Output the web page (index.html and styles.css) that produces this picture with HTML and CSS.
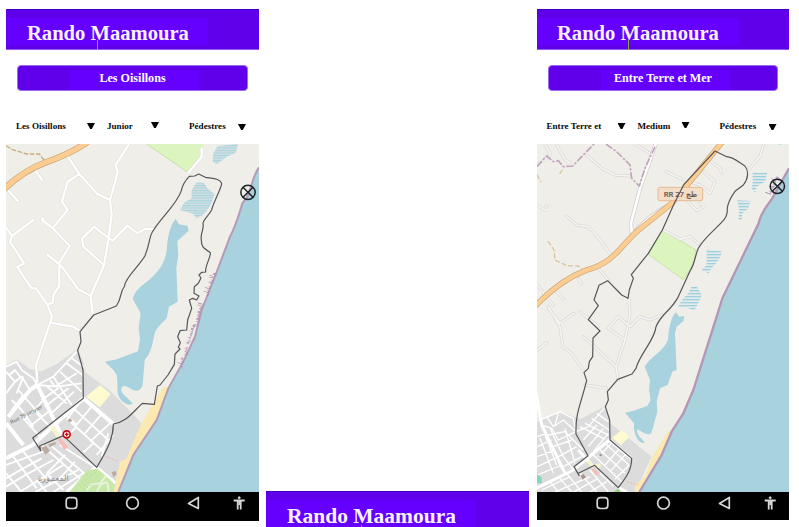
FILE: index.html
```html
<!DOCTYPE html>
<html lang="fr">
<head>
<meta charset="utf-8">
<title>Rando Maamoura</title>
<link rel="stylesheet" href="styles.css">
</head>
<body>
<svg class="defs" width="0" height="0" aria-hidden="true">
  <defs>
    <pattern id="wet" width="12" height="7.5" patternUnits="userSpaceOnUse"><rect width="12" height="7.5" fill="#cfdfe1"/><rect width="12" height="3" fill="#a9d3df"/></pattern>
    <pattern id="wet2" width="12" height="9" patternUnits="userSpaceOnUse"><rect width="12" height="9" fill="#e3ecea"/><rect width="12" height="4" fill="#9dcfdf"/></pattern>
    <g id="nav" fill="none" stroke="#d6d6d6" stroke-width="1.7">
      <rect x="60.2" y="5.7" width="10.6" height="10.8" rx="3"/>
      <circle cx="126.500" cy="11.100" r="5.900"/>
      <path d="M192.300 5.500V16.500L182.500 11.500Z" stroke-linejoin="round"/>
      <g stroke-width="1.800"><circle cx="233.200" cy="5.800" r="1" fill="#d6d6d6" stroke-width="1"/><path d="M227.700 8.500H238.700M233.200 8V13" /><path d="M231.700 9V17.500M234.700 9V17.500"/></g>
    </g>
    <g id="locate" fill="none" stroke="#1c2428" stroke-width="4.500"><circle r="21.500"/><path d="M-15-15 15 15M15-15-15 15"/></g>
  </defs>
</svg>
<main class="board">
  <section class="phone">
    <header class="bar"><h1>Rando Maamoura</h1><i class="caret"></i></header>
    <button class="trail">Les Oisillons</button>
    <div class="filters">
      <span class="filter one">Les Oisillons<b></b></span>
      <span class="filter two">Junior<b></b></span>
      <span class="filter three">Pédestres<b></b></span>
    </div>
    <svg class="map" viewBox="18 12 759 1044" preserveAspectRatio="none">
      <rect x="18" y="12" width="759" height="1044" fill="#f0eee8"/>
      <path d="M18 675 50 658 90 688 125 694 170 672 232 628 250 665 254 695 330 752 425 850 425 900 345 1056H18Z" fill="#dcdcdc"/>
      <path d="M440 12H610L605 50 565 98Z" fill="#dcf4bd"/>
      <path d="M440 12 565 98" stroke="#c7dfb0" stroke-width="3"/>
      <path d="M653 18 714 12 707 38 680 50 652 72 638 66 640 40Z" fill="url(#wet)"/>
      <path d="M590 127 612 128 622 145 644 163 630 198 610 225 590 235 580 222 540 210 552 188 575 175 575 150Z" fill="url(#wet)"/>
      <path d="M777 80C750 120 756 165 728 188C717 220 711 250 690 290L650 396 605 510 585 590 550 665 505 745 470 840 400 945 355 1056H777Z" fill="#a9d2df"/>
      <path d="M490 740 425 850 400 905 380 955 360 965 340 1056H356L370 1012 400 945 470 840 508 742Z" fill="#fbe9b1"/>
      <path d="M777 82C750 120 756 165 728 188C717 220 711 250 690 290L650 396 605 510 585 590 550 665 505 745 470 840 400 945 355 1056" fill="none" stroke="#b79ab7" stroke-width="6"/>
      <path d="M527 237 537 253 562 257 566 272 551 286 532 303 535 345 529 385 533 485 507 500 500 535C480 555 464 570 462 590C455 620 452 640 434 660L428 735C419 760 402 752 392 746C372 730 358 740 366 758L398 790C390 800 365 790 356 768C350 755 354 730 350 705L340 690 315 665 350 658 414 634 420 596 416 565 422 520 400 480C396 470 410 450 425 437C460 412 495 380 500 330C503 290 510 255 527 237Z" fill="#a9d2df"/>
      <g fill="none" stroke-linejoin="round" stroke-linecap="round">
        <path class="road-edge" d="M386 14 347 75 353 98 330 180 335 225 325 300 312 375 272 468 278 520M205 52 238 102 290 160 330 180M107 93 126 120M22 148 54 184M238 102 203 125 186 185 203 210 158 264 209 318 178 368 178 438 160 465 158 488 142 494 156 530 150 550 108 675 112 725M142 344 186 380 235 448 272 468M158 264 126 240 130 234M18 262 36 288 100 240M36 288 30 305 72 370 52 382 95 445 108 445 142 494M312 375 250 320 246 295 283 260 300 275 338 302 382 257 412 280 435 267 462 267M150 548 220 560 240 572M605 25 605 50 565 98"/>
        <path class="road" d="M386 14 347 75 353 98 330 180 335 225 325 300 312 375 272 468 278 520M205 52 238 102 290 160 330 180M107 93 126 120M22 148 54 184M238 102 203 125 186 185 203 210 158 264 209 318 178 368 178 438 160 465 158 488 142 494 156 530 150 550 108 675 112 725M142 344 186 380 235 448 272 468M158 264 126 240 130 234M18 262 36 288 100 240M36 288 30 305 72 370 52 382 95 445 108 445 142 494M312 375 250 320 246 295 283 260 300 275 338 302 382 257 412 280 435 267 462 267M150 548 220 560 240 572M605 25 605 50 565 98"/>
        <path d="M20 18 35 28 80 42 118 42 132 60" stroke="#c9ad78" stroke-width="4" stroke-dasharray="11 8"/>
        <path d="M14 146Q70 92 135 68 210 42 260 8" stroke="#c9a576" stroke-width="19"/>
        <path d="M14 146Q70 92 135 68 210 42 260 8" stroke="#fbcd93" stroke-width="15"/>
      </g>
      <g transform="translate(0 510)" fill="none" stroke="#fff" stroke-width="5.500" stroke-linejoin="round">
        <path stroke-width="12" d="M18 445 98 405 250 265 341 343M112 225 150 305 185 378M18 340 70 405M112 225 90 240 25 320M288 472 345 520M288 472 200 546"/>
        <path d="M18 170 50 155 65 180 100 205 112 225 160 200 230 125M18 185 45 215 65 200 90 240M28 195 45 180 60 200M55 240 125 320M35 270 65 300 100 350M70 255 35 300M112 225 170 230 245 220M140 228 200 280M160 200 215 285M180 185 245 245M200 160 248 195M215 145 250 170M150 210 165 230 230 190M125 270 175 235M135 290 205 235M152 312 222 245M75 330 130 270M88 350 145 305M120 380 70 325M45 215 18 250M70 200 50 250M150 350 110 310"/>
        <path d="M215 290 325 390M205 330 310 425M275 290 225 350M305 312 255 370M330 340 270 395M340 375 290 435M240 275 200 330M230 350 200 380M280 400 250 427M195 310 230 345M325 370 305 440"/>
        <path d="M18 465 130 425M40 440 110 535M70 425 150 520M18 505 70 475 125 445M18 530 85 490 160 450M60 545 190 465M125 405 250 515M150 405 265 500M180 405 290 475M18 490 65 546M105 546 235 480M160 546 250 490M195 435 140 490M225 455 175 510M110 510 140 546M140 490 190 540"/>
      </g>
      <path d="M300 735 332 762 300 802 258 770Z" fill="#fffbd0"/>
      <path d="M150 863 163 857 180 890 170 892ZM195 875 214 880 210 900 192 893Z" fill="#f8f6c9"/>
      <path d="M172 897 182 895 205 920 193 930Z" fill="#f5bcb9"/>
      <path d="M124 923 138 917 150 933 136 944ZM145 913 166 906 168 912 150 922ZM203 840 211 834 217 842 208 848ZM335 997 347 992 350 1003 340 1012Z" fill="#bfaaa1"/>
      <path d="M208 1056 262 990 292 986 325 1014 345 1035 340 1056Z" fill="#c7e8a8"/>
      <g fill="none" stroke="#e7f2df" stroke-width="6"><path d="M260 1050 275 1033 300 1030 318 1008M290 1056Q300 1030 320 1027 328 1040 325 1056"/></g>
      <g fill="none" stroke="#88c272" stroke-width="2" stroke-dasharray="2 11"><path d="M235 1035 280 1005 300 1015M230 1048 275 1020M250 1050 295 1022M260 1005 290 998"/></g>
      <path d="M318 950 355 964" stroke="#edb6b2" stroke-width="3" stroke-dasharray="6 4"/>
      <g class="route"><path d="M290 982 190 887 119 918 122 932 98 894 250 775 249 690 233 631 243 605 240 575 281 525 349 498C368 470 357 460 374 438C370 420 420 375 435 347C452 305 447 290 457 276C480 235 530 195 544 152C548 130 560 117 568 109L584 108 596 102 616 112C640 116 660 116 665 130C665 145 640 185 635 210 623 230 610 240 609 250C613 270 600 280 604 300 604 325 615 326 631 338C632 355 615 375 617 396L605 397 597 405 603 414 595 430 583 440 582 460 597 468 590 480 578 475 568 480 575 505 563 540 560 570 540 572 533 590 541 608 535 622 540 627 525 642 523 673 504 705 480 735 472 738 463 793 427 790C395 820 378 847 340 852 340 888 328 920 290 982Z"/></g>
      <circle cx="200" cy="883" r="10.500" fill="#fff" stroke="#c40912" stroke-width="5"/><path d="M194.500 883H205.500M200 877.500V888.500" stroke="#c40912" stroke-width="4"/>
      <g class="place"><text x="34" y="852" font-size="16" transform="rotate(-27 34 852)" fill="#666">Rue 79 janvier</text><text x="160" y="1022" font-size="25" fill="#8a8a8a" text-anchor="middle">المعمورة</text></g>
      <g class="place" fill="#a98bae" font-size="20" text-anchor="middle"><text transform="translate(634 434) rotate(-70)">ولاية نابل</text><text transform="translate(598 526) rotate(-73)">المعمورة</text><text transform="translate(564 619) rotate(-72)">معتمدية بني خيار</text></g>
      <use href="#locate" x="744" y="157"/>
    </svg>
    <footer class="nav"><svg viewBox="0 0 253 28.500"><use href="#nav"/></svg></footer>
  </section>

  <section class="phone peek">
    <header class="bar"><h1>Rando Maamoura</h1><i class="caret"></i></header>
  </section>

  <section class="phone last">
    <header class="bar"><h1>Rando Maamoura</h1><i class="caret"></i></header>
    <button class="trail">Entre Terre et Mer</button>
    <div class="filters">
      <span class="filter one">Entre Terre et<b></b></span>
      <span class="filter two">Medium<b></b></span>
      <span class="filter three">Pédestres<b></b></span>
    </div>
    <svg class="map" viewBox="21 12 756 1044" preserveAspectRatio="none">
      <rect x="21" y="12" width="756" height="1044" fill="#f0eee8"/>
      <path d="M21 845 97 815 150 838 222 800 240 850 365 950 315 1056H21Z" fill="#dcdcdc"/>
      <path d="M397 270 498 330 490 375 460 419 355 343Z" fill="#dcf4bd" stroke="#c9e3ac" stroke-width="3"/>
      <path d="M668 97H712L705 125 680 140 675 158 665 145 668 128ZM622 181 662 183 655 205 637 220 635 240H625L628 215ZM530 328 577 335 566 360 548 380 535 400 515 390 530 375ZM484 440 500 438 515 465 505 490 492 513 478 505 443 500 460 475 475 460ZM742 12H758L750 19Z" fill="url(#wet2)"/>
      <path d="M777 85 738 155C715 200 693 210 686 250L640 345 577 475 560 530 517 665 490 750 460 820 425 875 395 945 328 1056H777Z" fill="#a9d2df"/>
      <path d="M415 872 365 955 345 1010 315 1035 315 1056H330L395 945 425 875Z" fill="#fbe9b1"/>
      <path d="M777 85 738 155C715 200 693 210 686 250L640 345 577 475 560 530 517 665 490 750 460 820 425 875 395 945 328 1056" fill="none" stroke="#b397b5" stroke-width="7"/>
      <path d="M437 517 448 530 463 528 460 543 440 560 435 580 440 690 427 695 413 735 390 745 380 785 382 815 364 880C350 890 330 870 322 868C315 885 345 900 343 910C325 910 310 885 312 850L285 818 310 812 352 798 362 780 357 750 360 720 344 680C360 650 400 635 414 600 416 560 425 530 437 517Z" fill="#a9d2df"/>
      <g fill="none" stroke-linejoin="round" stroke-linecap="round">
        <path class="lane-edge" d="M45 14 62 42 45 60 22 75M80 14 105 60 122 68M170 45 215 85 255 105 300 108M315 12 360 40M410 95 450 115 510 135 540 160 555 125 520 95M530 55 570 85 575 100M470 180 500 212 525 198 510 190M22 195 45 212 50 198M110 228 140 255 175 260 215 305 245 350M205 385 237 423M145 415 155 432M80 455 100 477M22 435 70 495M132 520 90 550 55 505M150 515 205 560M400 270 450 298 480 290 510 315M700 15 690 50 655 90M297 475 300 525 285 600 258 680 265 720M285 600 235 565 265 530 300 560 330 530 360 540 395 525M55 500 90 560 98 620 125 640 160 690M160 590 258 680M165 735 230 745M22 630 50 608"/>
        <path class="lane" d="M45 14 62 42 45 60 22 75M80 14 105 60 122 68M170 45 215 85 255 105 300 108M315 12 360 40M410 95 450 115 510 135 540 160 555 125 520 95M530 55 570 85 575 100M470 180 500 212 525 198 510 190M22 195 45 212 50 198M110 228 140 255 175 260 215 305 245 350M205 385 237 423M145 415 155 432M80 455 100 477M22 435 70 495M132 520 90 550 55 505M150 515 205 560M400 270 450 298 480 290 510 315M700 15 690 50 655 90M297 475 300 525 285 600 258 680 265 720M285 600 235 565 265 530 300 560 330 530 360 540 395 525M55 500 90 560 98 620 125 640 160 690M160 590 258 680M165 735 230 745M22 630 50 608"/>
        <path d="M377 12 330 145 303 250 306 285Q350 230 425 190" stroke="#cfcccb" stroke-width="12"/><path d="M377 12 330 145 303 250 306 285Q350 230 425 190" stroke="#fff" stroke-width="8"/>
        <path d="M22 78 50 48 70 65 85 62 100 80 128 78 192 12M230 14 260 35 300 75 305 115 328 138 345 85 375 20" stroke="#bea5bd" stroke-width="5" stroke-dasharray="18 9 3 9"/>
        <path d="M55 305 72 330 75 360 110 377 145 378 158 390M90 100 100 85M22 105 32 125" stroke="#d9c5a0" stroke-width="4" stroke-dasharray="12 9"/>
        <path d="M14 500Q90 420 170 390C250 370 270 320 320 275L425 190 480 125 575 8" stroke="#cda978" stroke-width="17"/>
        <path d="M14 500Q90 420 170 390C250 370 270 320 320 275L425 190 480 125 575 8" stroke="#fbcd93" stroke-width="13"/>
      </g>
      <g transform="translate(0 510)" fill="none" stroke="#fff" stroke-width="4" stroke-linejoin="round">
        <path stroke-width="9" d="M18 245 35 345 105 490M18 535 60 515 130 480 238 390 303 445M145 420 190 470M265 533 290 546"/>
        <path d="M30 330 90 305 130 325 138 365 175 350 222 295M50 320 70 350 100 330 138 365M35 345 65 355 85 390 138 365M55 375 105 365 160 420M70 410 125 390M85 440 140 410M100 470 155 440M60 355 100 440 130 480M105 355 135 460M85 310 75 345M150 350 220 385M165 340 235 375M185 325 238 360M200 310 235 335M160 390 200 345M175 410 220 355M190 425 235 370M22 380 50 370M22 410 65 390M22 440 75 420M22 470 85 440M22 495 95 465M45 375 80 465M30 385 70 490"/>
        <path d="M205 415 285 490M225 400 297 465M190 435 275 515M245 400 205 440M265 420 225 465M285 435 240 485M298 465 255 508M60 515 85 546M85 500 125 546M110 490 155 546M150 490 200 546M180 480 235 546M210 490 250 528M35 540 120 500M75 546 180 500M130 546 205 505M180 546 230 515"/>
      </g>
      <path d="M275 870 299 890 273 915 246 893Z" fill="#fffbd0"/>
      <path d="M170 965 180 960 190 976 182 980ZM195 972 210 970 213 982 200 985Z" fill="#f8f6c9"/>
      <path d="M185 988 193 984 207 1000 198 1007Z" fill="#f5bcb9"/><path d="M152 1007 160 1002 168 1012 158 1019ZM208 943 214 940 216 948 208 949Z" fill="#ab9489"/>
      <path d="M21 1003 35 1012 35 1030 21 1030Z" fill="#8bd4b4"/><path d="M250 1056 265 1046 272 1056Z" fill="#91d477"/>
      <path d="M290 1025 325 1035" stroke="#edb6b2" stroke-width="3" stroke-dasharray="6 4"/>
      <rect x="384" y="142" width="134" height="40" rx="5" fill="#f5dec7" stroke="#e4bb93" stroke-width="3"/>
      <text class="place" x="451" y="171" text-anchor="middle" font-size="23" fill="#5d5147" stroke="#5d5147" stroke-width=".7">RR 27 طج</text>
      <g class="route"><path d="M265 1043 194 976 145 1000 147 1006 132 980 174 947 138 882C136 820 150 800 170 722L162 698 175 685 178 665 188 650 189 594 210 573 175 539 205 497 192 480 207 436 233 422 275 465 294 475 298 450 310 415 304 404 355 340 397 270 433 190 462 133 555 33 590 50C610 50 630 70 645 78 656 92 656 115 640 135L615 154C600 175 590 200 592 215Q590 230 583 238C560 265 520 295 505 325 494 350 495 370 480 393L444 472C420 515 395 520 378 560 375 600 330 640 318 685L306 702 263 718 232 755 235 780 226 800 239 840 240 900 305 955C305 990 290 1010 265 1043Z"/></g>
      <text class="place" transform="translate(733 138) rotate(-65)" fill="#ac88ae" font-size="23" text-anchor="middle">ولاية نا</text>
      <use href="#locate" x="742" y="139"/>
    </svg>
    <footer class="nav"><svg viewBox="0 0 253 28.500"><use href="#nav"/></svg></footer>
  </section>
</main>
</body>
</html>
```
FILE: styles.css
```css
* { box-sizing: border-box; }
body { margin: 0; background: #fff; font-family: "Liberation Serif", serif; font-weight: bold; overflow: hidden; }
.defs { position: absolute; }
.board { display: grid; grid-template-columns: 253px 263px 252px; column-gap: 7px; width: 799px; height: 527px; padding: 9px 0 0 6px; overflow: hidden; }
.phone { display: flex; flex-direction: column; }
.last { margin-left: 1px; width: 252px; }
.peek { margin-top: 482px; }
.bar { position: relative; flex: none; height: 41px; padding-left: 21px; border-top: 1px solid #4200c5; border-bottom: 1px solid #8f5df0; background: linear-gradient(#6500ff, #6500ff) 0 8px / 202px 27px no-repeat #6000ea; }
.last .bar { padding-left: 20px; }
.bar h1 { margin: 0; font-size: 20.6px; line-height: 24px; padding-top: 11px; color: #f8f2ff; white-space: nowrap; }
.caret { position: absolute; left: 91px; bottom: -1px; width: 1px; height: 10px; background: #8e9e78; }
.last .caret { background: #85ad35; }
.peek .bar { background-size: 210px 33px; }
.peek h1 { font-size: 21.5px; padding-top: 12px; }
.peek .caret { left: 95px; bottom: -4px; }
.trail { flex: none; width: 231px; height: 26px; margin: 15px 0 0 11px; padding: 0; border: 1px solid #9b6cf3; border-radius: 4px; background: linear-gradient(#6500ff, #6500ff) 52px 4px / 129px 20px no-repeat #6000ea; color: #fff; font: bold 12.1px "Liberation Serif", serif; }
.last .trail { width: 230px; }
.filters { flex: none; display: grid; grid-template-columns: 91px 82px 1fr; height: 53px; padding: 30px 14px 0 10px; font-size: 9.1px; line-height: 11px; color: #080808; }
.last .filters { padding-left: 9.5px; }
.filter { display: flex; justify-content: space-between; align-items: flex-start; height: 12px; white-space: nowrap; }
.filter b { flex: none; width: 8px; height: 6px; margin-top: 2px; background: #050505; clip-path: polygon(0 0, 100% 0, 60% 100%, 40% 100%); }
.one { width: 79px; }
.two { width: 52px; }
.two b { margin-top: 1px; }
.three { width: 57px; }
.three b { margin-top: 3px; }
.map { display: block; flex: none; width: 100%; height: 348px; }
.nav { flex: none; height: 29px; background: #000; }
.last .nav { height: 28px; }
.nav svg { display: block; width: 253px; height: 28.500px; }
.last .nav svg { margin-left: -.5px; }
.route { fill: none; stroke: #57575a; stroke-width: 3.600; stroke-linejoin: round; }
.road-edge { stroke: #dfddd9; stroke-width: 10; }
.road { stroke: #fff; stroke-width: 7; }
.lane-edge { stroke: #d9d8d6; stroke-width: 9; }
.lane { stroke: #f5f4f2; stroke-width: 5; }
.place { font-family: "Noto Sans", "DejaVu Sans", sans-serif; font-weight: normal; }
```
